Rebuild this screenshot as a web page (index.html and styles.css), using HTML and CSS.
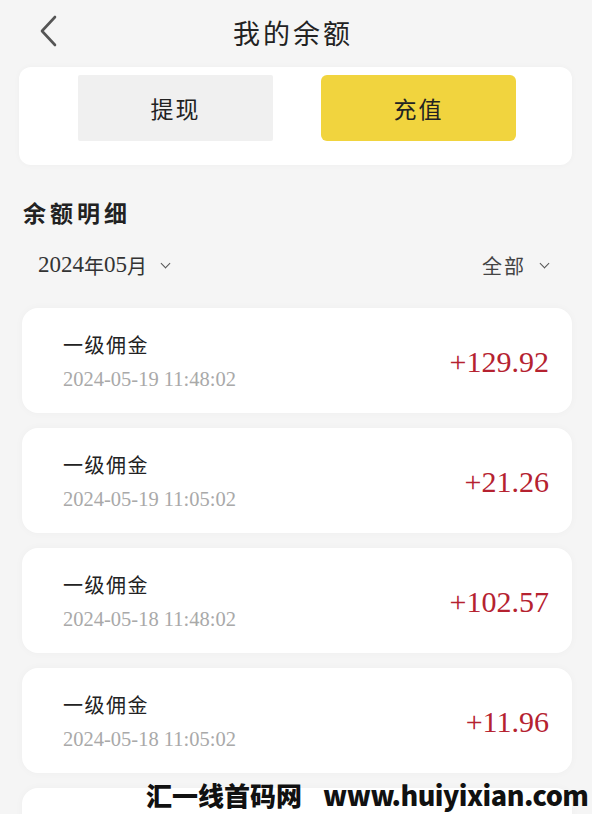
FILE: index.html
```html
<!DOCTYPE html>
<html lang="zh-CN">
<head>
<meta charset="utf-8">
<title>我的余额</title>
<link rel="stylesheet" href="styles.css">
</head>
<body>
<div class="page">
  <header class="topbar">
    <span class="back">
      <svg width="20" height="32" viewBox="0 0 20 32"><path d="M16 2 L3 16 L16 30" fill="none" stroke="#555" stroke-width="2.6" stroke-linecap="round" stroke-linejoin="round"/></svg>
    </span>
    <h1 class="title">我的余额</h1>
  </header>

  <section class="action-card">
    <button class="btn btn-gray">提现</button>
    <button class="btn btn-yellow">充值</button>
  </section>

  <h2 class="section-title">余额明细</h2>

  <div class="filters">
    <span class="filter"><span class="num">2024</span>年<span class="num">05</span>月<span class="chev"></span></span>
    <span class="filter filter-right">全部<span class="chev"></span></span>
  </div>

  <ul class="list">
    <li class="item">
      <div class="info"><div class="name">一级佣金</div><div class="time">2024-05-19 11:48:02</div></div>
      <div class="amount">+129.92</div>
    </li>
    <li class="item">
      <div class="info"><div class="name">一级佣金</div><div class="time">2024-05-19 11:05:02</div></div>
      <div class="amount">+21.26</div>
    </li>
    <li class="item">
      <div class="info"><div class="name">一级佣金</div><div class="time">2024-05-18 11:48:02</div></div>
      <div class="amount">+102.57</div>
    </li>
    <li class="item">
      <div class="info"><div class="name">一级佣金</div><div class="time">2024-05-18 11:05:02</div></div>
      <div class="amount">+11.96</div>
    </li>
    <li class="item item-empty"></li>
  </ul>

  <div class="watermark"><span class="wm-cn">汇一线首码网</span><span class="wm-en">www.huiyixian.com</span></div>
</div>
</body>
</html>
```

FILE: styles.css
```css
html, body {
  margin: 0;
  padding: 0;
}
body {
  background: #f5f5f5;
  font-family: "Liberation Serif", "Noto Sans CJK SC", serif;
  color: #222;
  width: 592px;
  height: 814px;
  overflow: hidden;
}
.page {
  position: relative;
  height: 814px;
  overflow: hidden;
}
.topbar {
  height: 64px;
  display: flex;
  align-items: center;
  justify-content: center;
  position: relative;
}
.back {
  position: absolute;
  left: 39px;
  top: 15px;
  width: 20px;
  height: 32px;
  display: flex;
}
.title {
  margin: 0 0 0 -6px;
  font-family: "Noto Sans CJK SC", sans-serif;
  font-weight: 400;
  font-size: 27px;
  letter-spacing: 3px;
  color: #222;
  line-height: 1;
}
.action-card {
  margin: 3px 20px 0 19px;
  height: 98px;
  box-sizing: border-box;
  padding: 8px 56px 24px 59px;
  background: #fff;
  border-radius: 12px;
  display: flex;
  gap: 48px;
  box-shadow: 0 0 6px rgba(0,0,0,0.03);
}
.btn {
  flex: 1;
  height: 66px;
  border: 0;
  border-radius: 6px;
  font-family: "Noto Sans CJK SC", sans-serif;
  font-size: 23px;
  letter-spacing: 2px;
  color: #222;
  padding: 0;
}
.btn-gray {
  background: #f0f0f0;
  border-radius: 2px;
}
.btn-yellow {
  background: #f1d43e;
}
.section-title {
  margin: 34px 0 0 23px;
  font-family: "Noto Sans CJK SC", sans-serif;
  font-weight: 700;
  font-size: 23px;
  letter-spacing: 4px;
  line-height: 26px;
  color: #222;
}
.filters {
  display: flex;
  justify-content: space-between;
  align-items: center;
  margin: 23px 44px 0 38px;
  height: 34px;
}
.filter {
  display: flex;
  align-items: center;
  font-family: "Noto Sans CJK SC", sans-serif;
  font-size: 20px;
  color: #333;
}
.filter .num {
  font-family: "Liberation Serif", serif;
  font-size: 23px;
}
.filter-right {
  color: #444;
  letter-spacing: 2px;
}
.chev {
  display: inline-block;
  width: 6px;
  height: 6px;
  border-right: 1.6px solid #555;
  border-bottom: 1.6px solid #555;
  transform: rotate(45deg);
  margin-left: 15px;
  margin-top: -4px;
}
.list {
  list-style: none;
  margin: 26px 20px 0 22px;
  padding: 0;
  display: flex;
  flex-direction: column;
  gap: 15px;
}
.item {
  height: 105px;
  flex: none;
  box-sizing: border-box;
  background: #fff;
  border-radius: 16px;
  display: flex;
  align-items: center;
  justify-content: space-between;
  padding: 0 23px 0 41px;
  box-shadow: 0 0 8px rgba(0,0,0,0.03);
}
.info {
  display: flex;
  flex-direction: column;
}
.name {
  font-family: "Noto Sans CJK SC", sans-serif;
  font-size: 20px;
  letter-spacing: 1.5px;
  color: #222;
  line-height: 28px;
}
.time {
  font-family: "Liberation Serif", serif;
  font-size: 20.5px;
  color: #a9a9a9;
  line-height: 24px;
  margin-top: 8px;
}
.amount {
  font-family: "Liberation Serif", serif;
  font-size: 30px;
  color: #b52230;
  margin-top: 2px;
}
.watermark {
  position: absolute;
  left: 146px;
  top: 780px;
  display: flex;
  align-items: baseline;
  gap: 21px;
  color: #111;
  font-family: "Noto Sans CJK SC", sans-serif;
  font-weight: 900;
  white-space: nowrap;
  line-height: 30px;
}
.wm-cn {
  font-size: 26px;
  letter-spacing: 0;
}
.wm-en {
  font-size: 27px;
  letter-spacing: -0.5px;
}
```
